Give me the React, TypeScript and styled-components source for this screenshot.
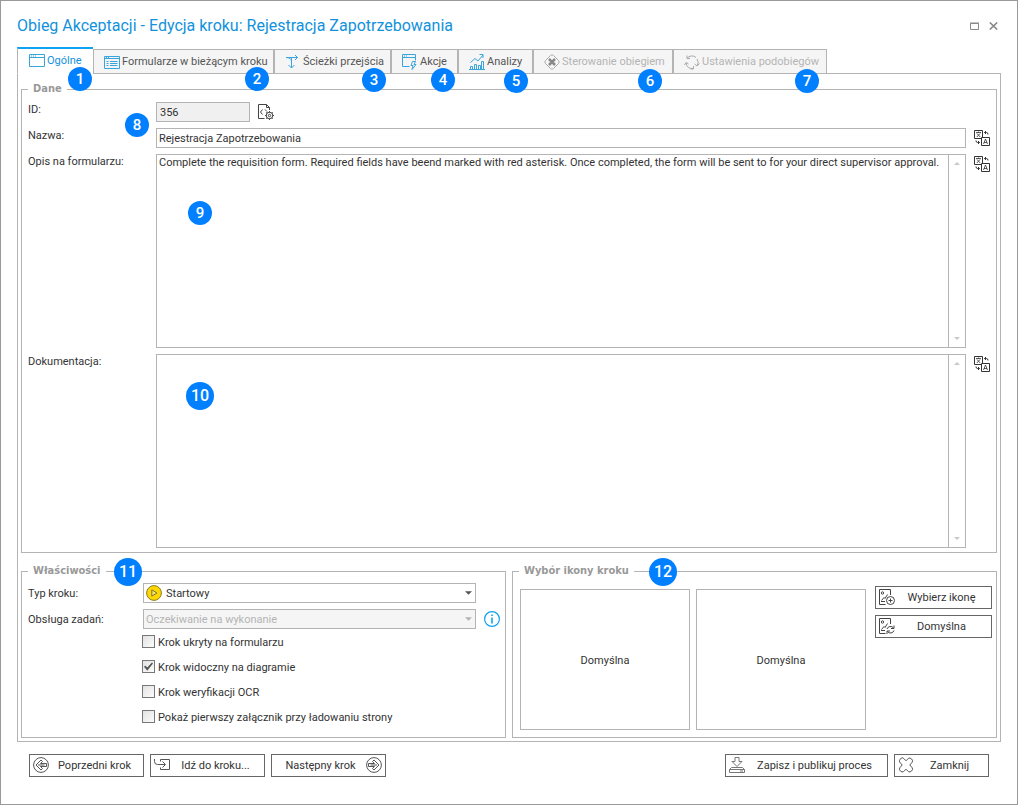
import React from "react";
import styled, { createGlobalStyle } from "styled-components";

const color = {
  text: "#333333",
  muted: "#b4b4b4",
  line: "#b4b4b4",
  dark: "#666666",
  blue: "#1292dc",
  accent: "#0ea2f2",
  badge: "#007fff",
};

const GlobalStyle = createGlobalStyle`
  * { box-sizing: border-box; }
  body { margin: 0; background: #fff; }
  body, button, input, select, textarea {
    font-family: Roboto, "DejaVu Sans Condensed", sans-serif;
    font-size: 11px;
    line-height: 14px;
    color: ${color.text};
  }
`;

const Window = styled.main`
  display: flex;
  flex-direction: column;
  min-height: 100vh;
  padding: 0 16px 12px;
  border: 1px solid #999;
`;

const TitleBar = styled.header`
  display: flex;
  align-items: center;
  justify-content: space-between;
  height: 46px;
  padding: 4px 2px 0 0;
`;

const Title = styled.h1`
  margin: 0;
  font-size: 16px;
  line-height: 20px;
  font-weight: 400;
  color: ${color.blue};
`;

const WindowButtons = styled.div`
  display: flex;
  gap: 8px;
`;

const PlainButton = styled.button`
  display: flex;
  padding: 0;
  border: 0;
  background: none;
`;

const WindowButton = styled(PlainButton)`
  width: 11px;
  justify-content: center;
`;

const Tabs = styled.div`
  display: flex;
  align-items: flex-end;
  position: relative;
  z-index: 1;
  margin-bottom: -1px;
`;

const Tab = styled.button<{ $active?: boolean; $width: number }>`
  position: relative;
  display: flex;
  align-items: center;
  gap: 2px;
  width: ${(p) => p.$width}px;
  height: ${(p) => (p.$active ? 27 : 25)}px;
  padding: ${(p) => (p.$active ? "0 0 1px 11px" : "0 0 0 10px")};
  border: 1px solid ${color.line};
  border-top: ${(p) => (p.$active ? `2px solid ${color.accent}` : `1px solid ${color.line}`)};
  border-right-width: ${(p) => (p.$active ? 0 : 1)}px;
  border-bottom-color: ${(p) => (p.$active ? "#fff" : color.line)};
  background: ${(p) => (p.$active ? "#fff" : "#f5f5f5")};
  color: ${(p) => (p.$active ? color.blue : "#555")};
  white-space: nowrap;

  &:disabled { color: ${color.muted}; }
`;

const Badge = styled.span<{ $large?: boolean; $left?: number; $right?: number; $top: number }>`
  position: absolute;
  z-index: 2;
  top: ${(p) => p.$top}px;
  ${(p) => (p.$left !== undefined ? `left: ${p.$left}px;` : `right: ${p.$right}px;`)}
  display: flex;
  align-items: center;
  justify-content: center;
  width: ${(p) => (p.$large ? 28 : 24)}px;
  height: ${(p) => (p.$large ? 28 : 24)}px;
  border-radius: 50%;
  background: ${color.badge};
  color: #fff;
  font: 500 ${(p) => (p.$large ? 16 : 15)}px/20px Roboto, sans-serif;
  pointer-events: none;
`;

const Pane = styled.section`
  display: flex;
  flex-direction: column;
  gap: 11px;
  padding: 8px 3px 3px;
  border: 1px solid ${color.line};
`;

const Columns = styled.div`
  display: grid;
  grid-template-columns: 1fr 1fr;
  gap: 6px;
`;

const Group = styled.fieldset`
  position: relative;
  min-width: 0;
  margin: 0;
  padding: 0;
  border: 1px solid ${color.line};
`;

const Legend = styled.legend`
  margin-left: 6px;
  padding: 0 5px 2px;
  font-family: "DejaVu Sans Condensed", sans-serif;
  line-height: 13px;
  font-weight: 700;
  color: #999;
`;

const DataGrid = styled.div`
  display: grid;
  grid-template-columns: 120px 1fr 16px;
  gap: 6px 8px;
  padding: 5px 6px 4px;
`;

const PropertyGrid = styled.div`
  display: grid;
  grid-template-columns: 107px 1fr 16px;
  gap: 6px 8px;
  align-items: center;
  padding: 4px 5px 0 6px;
`;

const Label = styled.label`
  padding-top: 1px;
  white-space: nowrap;
`;

const IdLine = styled.div`
  display: flex;
  align-items: center;
  gap: 8px;
  grid-column: span 2;
`;

const TextInput = styled.input`
  width: 100%;
  height: 20px;
  padding: 0 2px;
  border: 1px solid ${color.line};
  border-radius: 0;
  outline: 0;
`;

const IdInput = styled(TextInput)`
  width: 94px;
  padding: 0 3px;
  background: #f0f0f0;
`;

const Memo = styled.div`
  position: relative;
  display: flex;
  height: 194px;
  border: 1px solid ${color.line};
`;

const MemoText = styled.textarea`
  flex: 1;
  min-width: 0;
  padding: 1px 2px 0;
  border: 0;
  outline: 0;
  resize: none;
  overflow: hidden;
`;

const ScrollTrack = styled.div`
  display: flex;
  flex-direction: column;
  align-items: center;
  justify-content: space-between;
  width: 17px;
  padding: 7px 0;
  border-left: 1px solid ${color.line};
`;

const TranslateButton = styled(PlainButton)`
  align-self: start;
  margin-top: 2px;
`;

const SelectBox = styled.div`
  position: relative;
  display: flex;
  align-items: center;
`;

const Select = styled.select<{ $icon?: boolean }>`
  appearance: none;
  width: 100%;
  height: 20px;
  padding: 1px 18px 0 ${(p) => (p.$icon ? 22 : 2)}px;
  border: 1px solid ${color.line};
  border-radius: 0;
  background: #fff;

  &:disabled {
    background: #f5f5f5;
    color: ${color.muted};
    opacity: 1;
  }
`;

const SelectIcon = styled.span`
  position: absolute;
  left: 3px;
  top: 2px;
  display: flex;
`;

const SelectArrow = styled.span`
  position: absolute;
  right: 4px;
  top: 8px;
  display: flex;
  pointer-events: none;
`;

const CheckList = styled.div`
  display: flex;
  flex-direction: column;
  gap: 11px;
  padding: 6px 6px 0 120px;
`;

const CheckLabel = styled.label`
  display: flex;
  align-items: flex-start;
  gap: 3px;
  height: 14px;
  line-height: 16px;
`;

const CheckBox = styled.input`
  appearance: none;
  display: grid;
  place-content: center;
  width: 13px;
  height: 13px;
  margin: 0;
  border: 1px solid #777;
  background: linear-gradient(135deg, #e2e2e2, #fcfcfc);

  &:checked::after {
    content: "";
    width: 9px;
    height: 9px;
    background: #555;
    clip-path: polygon(0 52%, 14% 40%, 36% 62%, 88% 6%, 100% 18%, 36% 96%);
  }
`;

const IconPanel = styled.div`
  display: flex;
  align-items: flex-start;
  gap: 6px;
  padding: 7px 4px 7px 7px;
`;

const Preview = styled.div`
  flex: 1;
  display: flex;
  align-items: center;
  justify-content: center;
  height: 141px;
  margin-top: 3px;
  padding-top: 2px;
  border: 1px solid ${color.line};
`;

const ButtonStack = styled.div`
  display: flex;
  flex-direction: column;
  gap: 6px;
  width: 117px;
  margin-left: 3px;
`;

const Button = styled.button<{ $width?: number }>`
  display: flex;
  align-items: center;
  width: ${(p) => (p.$width ? `${p.$width}px` : "100%")};
  height: 23px;
  padding: 0 3px 2px;
  border: 1px solid ${color.dark};
  background: #fff;
  white-space: nowrap;
`;

const ButtonText = styled.span`
  flex: 1;
  padding-top: 3px;
  text-align: center;
`;

const Footer = styled.footer`
  display: flex;
  justify-content: space-between;
  padding: 12px 12px 0;
`;

const ButtonRow = styled.div`
  display: flex;
  gap: 6px;
`;

const IconSvg = styled.svg`
  flex-shrink: 0;
`;

const Svg = ({ children, stroke = "#555" }: { children: React.ReactNode; stroke?: string }) => (
  <IconSvg width="16" height="16" viewBox="0 0 16 16" fill="none" stroke={stroke} aria-hidden="true">
    {children}
  </IconSvg>
);

const TAB_BLUE = "#3aa5dc";

const WindowIcon = () => (
  <Svg stroke={TAB_BLUE}>
    <path d="M.5 1.500h15v12H.5zM.5 4.500h15" />
    <path d="M2 3h1M4 3h1M6 3h1" />
  </Svg>
);

const FormIcon = () => (
  <Svg stroke={TAB_BLUE}>
    <path d="M.5 2.500h15v12H.5zM.5 4.500h15" />
    <path d="M2 3.500h1M4 3.500h1M2.500 7.500h2M6 7.500h7.500M2.500 9.500h2M6 9.500h7.500M2.500 11.500h2M6 11.500h7.500" />
  </Svg>
);

const PathsIcon = () => (
  <Svg stroke={TAB_BLUE}>
    <path d="M1 3.500h11.500M10 1l2.500 2.500L10 6M6.500 4v10M3.500 11l3 3 3-3M1 3.500c3 0 5.500 1 5.500 4" />
  </Svg>
);

const ActionsIcon = () => (
  <Svg stroke={TAB_BLUE}>
    <path d="M7.500 12.500h-7v-12h13v6M.5 3.500h13M2 2h1M4 2h1" />
    <path d="M10.500 7.500h3l-1.500 3h2l-4 5 1-4h-2z" />
  </Svg>
);

const ChartIcon = () => (
  <Svg stroke={TAB_BLUE}>
    <path d="M1.500 15.500v-3h2v3M5.500 15.500v-5h2v5M9.500 15.500v-4h2v4M12.500 15.500v-8h2v8M0 15.500h16" />
    <path d="M1.500 8.500l4.500-4 3 2.500 5-6M10.500.5H14V4" />
  </Svg>
);

const ControlIcon = () => (
  <Svg stroke="#aaa">
    <path d="M6.500 1.500q1.500-1.500 3 0l5 5q1.500 1.500 0 3l-5 5q-1.500 1.500-3 0l-5-5q-1.500-1.500 0-3z" />
    <path d="M5 5l6 6M11 5l-6 6" stroke="#888" strokeWidth="2.500" />
  </Svg>
);

const CycleIcon = () => (
  <Svg stroke="#aaa">
    <path d="M3 4.500A6 6 0 0 1 12 3.500M3 1.500v3h3M13 5a6 6 0 0 1 0 7M15.500 9.500L13 12l-2.500-2M9 14.500A6 6 0 0 1 2 9M.5 11L2 8.500 4.500 10M9.500 12v3h-3" />
  </Svg>
);

const CodeGearIcon = () => (
  <Svg stroke="#444">
    <path d="M6.500 14.500h-6v-14h8l3 3V6M8.500.5v3h3" />
    <path d="M4.500 5.500L2.500 8l2 2.500M7 5.500L9 7.500" />
    <circle cx="11.500" cy="11.500" r="3.300" />
    <circle cx="11.500" cy="11.500" r="1.200" />
    <path d="M11.500 7v1.500M11.500 14.500V16M7 11.500h1.500M14.500 11.500H16M8.300 8.300l1 1M13.700 13.700l1 1M14.700 8.300l-1 1M9.300 13.700l-1 1" />
  </Svg>
);

const TranslateIcon = () => (
  <Svg stroke="#333">
    <path d="M7 8.500H.5v-8h8V7M7.500 7.500h8v8h-8z" />
    <path d="M2 2.500h5M4.500 1.500v1M3 3.500l3.200 3.500M6 3.500L2.800 7M9.500 14l2-5 2 5M10 12.500h3" strokeWidth=".8" />
    <path d="M10.500 2.500h2q1.500 0 1.500 2M12 1l-1.500 1.500L12 4M2 10.500q0 2 1.500 2h2M4 11l1.500 1.500L4 14" />
  </Svg>
);

const StartIcon = () => (
  <Svg>
    <circle cx="8" cy="8" r="7.400" fill="#ffd800" stroke="#8d7c21" />
    <path d="M5.800 4.800v6.400L11 8z" fill="#ffe45a" stroke="#77724c" />
  </Svg>
);

const InfoIcon = () => (
  <Svg stroke={color.accent}>
    <circle cx="8" cy="8" r="7.400" strokeWidth="1.200" />
    <path d="M8 6.500V12.500M8 3.500v1.500" strokeWidth="1.600" />
  </Svg>
);

const RoundArrowIcon = ({ next }: { next?: boolean }) => (
  <Svg>
    <circle cx="8" cy="8" r="7.400" />
    <path
      d={
        next
          ? "M2.500 6.500h6L6.500 4.500 8 3l5 5-5 5-1.500-1.500 2-2h-6zM4.500 8H11"
          : "M13.500 6.500h-6l2-2L8 3 3 8l5 5 1.500-1.500-2-2h6zM11.500 8H5"
      }
    />
  </Svg>
);

const GoToIcon = () => (
  <Svg>
    <path d="M6.500 4.500v-2h9v10h-9v-2M.5 2v2.500q0 3 3 3H11M8.500 4.500l3 3-3 3" />
  </Svg>
);

const PublishIcon = () => (
  <Svg stroke="#777">
    <path d="M6 .5h4v4h3L8 9.500 3 4.500h3zM2.500 10.500h11l2 2v3H.5v-3zM.5 12.500h15M11 14h3" />
  </Svg>
);

const CloseIcon = () => (
  <Svg>
    <path d="M4 .8q1 0 1.600.6L8 3.800l2.400-2.400Q12 .3 13.600 2q1.700 1.700.6 3.200L11.800 8l2.400 2.800q1.100 1.500-.6 3.200-1.600 1.700-3.200.6L8 12.200l-2.400 2.400Q4 15.700 2.400 14 .7 12.300 1.800 10.800L4.200 8 1.800 5.200Q.7 3.700 2.400 2 3.200.9 4 .8z" />
  </Svg>
);

const PictureIcon = ({ reset }: { reset?: boolean }) => (
  <Svg stroke="#444">
    <path d="M6.500 15.500h-6V.5h11V6" />
    <circle cx="3.500" cy="4" r="1.200" />
    <path d="M2 12.500h4M2.500 11.500L5 8.500l1 1 2.500-4" />
    {reset ? (
      <path d="M8 11a3.700 3.700 0 0 1 6.500-1M15 7.500v3h-3M15 12.500a3.700 3.700 0 0 1-6.500 1M8 16v-3h3" />
    ) : (
      <>
        <circle cx="11.500" cy="11.500" r="4" />
        <path d="M11.500 9.500v4M9.500 11.500h4" />
      </>
    )}
  </Svg>
);

const Arrow = ({ up, fill, wide }: { up?: boolean; fill: string; wide?: boolean }) => (
  <svg width={wide ? 7 : 6} height={wide ? 4 : 3} viewBox="0 0 8 4" fill={fill} aria-hidden="true">
    <path d={up ? "M0 4l4-4 4 4z" : "M0 0l4 4 4-4z"} />
  </svg>
);

const tabs = [
  { text: "Ogólne", icon: <WindowIcon />, width: 76, badge: 1, badgeTop: 18, active: true },
  { text: "Formularze w bieżącym kroku", icon: <FormIcon />, width: 181, badge: 4, badgeTop: 17 },
  { text: "Ścieżki przejścia", icon: <PathsIcon />, width: 117, badge: 4, badgeTop: 18 },
  { text: "Akcje", icon: <ActionsIcon />, width: 67, badge: 2, badgeTop: 18 },
  { text: "Analizy", icon: <ChartIcon />, width: 75, badge: 4, badgeTop: 19 },
  { text: "Sterowanie obiegiem", icon: <ControlIcon />, width: 140, badge: 10, badgeTop: 19, disabled: true },
  { text: "Ustawienia podobiegów", icon: <CycleIcon />, width: 154, badge: 7, badgeTop: 19, disabled: true },
];

const MemoField = ({ id, value, badge }: { id: string; value: string; badge: React.ReactNode }) => (
  <Memo>
    <MemoText id={id} defaultValue={value} spellCheck={false} />
    <ScrollTrack aria-hidden="true">
      <Arrow up fill="#c8c8c8" />
      <Arrow fill="#c8c8c8" />
    </ScrollTrack>
    {badge}
  </Memo>
);

const Translate = () => (
  <TranslateButton type="button" aria-label="Tłumaczenia">
    <TranslateIcon />
  </TranslateButton>
);

const checks = [
  { text: "Krok ukryty na formularzu" },
  { text: "Krok widoczny na diagramie", checked: true },
  { text: "Krok weryfikacji OCR" },
  { text: "Pokaż pierwszy załącznik przy ładowaniu strony" },
];

export default function App() {
  return (
    <Window lang="pl">
      <GlobalStyle />
      <TitleBar>
        <Title>Obieg Akceptacji - Edycja kroku: Rejestracja Zapotrzebowania</Title>
        <WindowButtons>
          <WindowButton type="button" aria-label="Maksymalizuj">
            <svg width="9" height="8" viewBox="0 0 9 8" fill="none" stroke="#888" aria-hidden="true">
              <path d="M.5 1.500h8v6h-8zM0 1h9" />
            </svg>
          </WindowButton>
          <WindowButton type="button" aria-label="Zamknij okno">
            <svg width="9" height="8" viewBox="0 0 9 8" fill="none" stroke="#888" strokeWidth="1.600" aria-hidden="true">
              <path d="M.8.5l7.400 7M8.200.5l-7.400 7" />
            </svg>
          </WindowButton>
        </WindowButtons>
      </TitleBar>

      <Tabs role="tablist">
        {tabs.map((t, i) => (
          <Tab
            key={t.text}
            type="button"
            role="tab"
            aria-selected={!!t.active}
            disabled={t.disabled}
            $active={t.active}
            $width={t.width}
          >
            {t.icon}
            {t.text}
            <Badge $top={t.badgeTop} $right={t.badge}>
              {i + 1}
            </Badge>
          </Tab>
        ))}
      </Tabs>

      <Pane>
        <Group>
          <Legend>Dane</Legend>
          <DataGrid>
            <Label htmlFor="step-id">ID:</Label>
            <IdLine>
              <IdInput id="step-id" readOnly defaultValue="356" />
              <PlainButton type="button" aria-label="Właściwości techniczne">
                <CodeGearIcon />
              </PlainButton>
            </IdLine>

            <Label htmlFor="step-name">Nazwa:</Label>
            <TextInput id="step-name" defaultValue="Rejestracja Zapotrzebowania" />
            <Translate />

            <Label htmlFor="step-desc">Opis na formularzu:</Label>
            <MemoField
              id="step-desc"
              value="Complete the requisition form. Required fields have beend marked with red asterisk. Once completed, the form will be sent to for your direct supervisor approval."
              badge={<Badge $top={46} $left={31}>9</Badge>}
            />
            <Translate />

            <Label htmlFor="step-docs">Dokumentacja:</Label>
            <MemoField
              id="step-docs"
              value=""
              badge={<Badge $large $top={27} $left={29}>10</Badge>}
            />
            <Translate />
          </DataGrid>
          <Badge $top={16} $left={103}>8</Badge>
        </Group>

        <Columns>
          <Group>
            <Legend>Właściwości</Legend>
            <PropertyGrid>
              <Label htmlFor="step-type">Typ kroku:</Label>
              <SelectBox>
                <Select id="step-type" $icon>
                  <option>Startowy</option>
                </Select>
                <SelectIcon>
                  <StartIcon />
                </SelectIcon>
                <SelectArrow>
                  <Arrow wide fill="#555" />
                </SelectArrow>
              </SelectBox>
              <span />

              <Label htmlFor="step-tasks">Obsługa zadań:</Label>
              <SelectBox>
                <Select id="step-tasks" disabled>
                  <option>Oczekiwanie na wykonanie</option>
                </Select>
                <SelectArrow>
                  <Arrow wide fill={color.muted} />
                </SelectArrow>
              </SelectBox>
              <PlainButton type="button" aria-label="Informacja">
                <InfoIcon />
              </PlainButton>
            </PropertyGrid>
            <CheckList>
              {checks.map((c) => (
                <CheckLabel key={c.text}>
                  <CheckBox type="checkbox" defaultChecked={c.checked} />
                  {c.text}
                </CheckLabel>
              ))}
            </CheckList>
            <Badge $large $top={-21} $left={92}>11</Badge>
          </Group>

          <Group>
            <Legend>Wybór ikony kroku</Legend>
            <IconPanel>
              <Preview>Domyślna</Preview>
              <Preview>Domyślna</Preview>
              <ButtonStack>
                <Button type="button">
                  <PictureIcon />
                  <ButtonText>Wybierz ikonę</ButtonText>
                </Button>
                <Button type="button">
                  <PictureIcon reset />
                  <ButtonText>Domyślna</ButtonText>
                </Button>
              </ButtonStack>
            </IconPanel>
            <Badge $large $top={-21} $left={136}>12</Badge>
          </Group>
        </Columns>
      </Pane>

      <Footer>
        <ButtonRow>
          <Button type="button" $width={115}>
            <RoundArrowIcon />
            <ButtonText>Poprzedni krok</ButtonText>
          </Button>
          <Button type="button" $width={115}>
            <GoToIcon />
            <ButtonText>Idź do kroku...</ButtonText>
          </Button>
          <Button type="button" $width={115}>
            <ButtonText>Następny krok</ButtonText>
            <RoundArrowIcon next />
          </Button>
        </ButtonRow>
        <ButtonRow>
          <Button type="button" $width={163}>
            <PublishIcon />
            <ButtonText>Zapisz i publikuj proces</ButtonText>
          </Button>
          <Button type="button" $width={95}>
            <CloseIcon />
            <ButtonText>Zamknij</ButtonText>
          </Button>
        </ButtonRow>
      </Footer>
    </Window>
  );
}
